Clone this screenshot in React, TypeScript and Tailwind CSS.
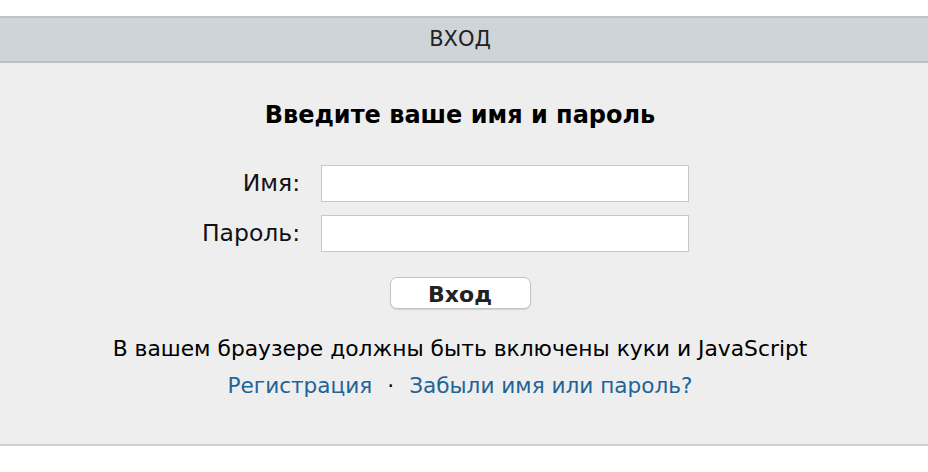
export default function App() {
  return (
    <div className="w-[928px] h-[472px] bg-white" style={{ fontFamily: '"DejaVu Sans", Verdana, sans-serif' }}>
      <div className="h-[16px]" />
      <div className="h-[47px] bg-[#cfd4d8] border-t-2 border-b-2 border-t-[#c0c4c8] border-b-[#bcc0c4] flex items-center justify-center text-[21px] text-[#222] pr-[8px]">
        ВХОД
      </div>
      <div className="h-[383px] bg-[#eeeeee] border-b-2 border-[#cfd1d4] flex flex-col items-center pr-[8px]">
        <div className="mt-[40px] text-[24px] font-bold text-black leading-none">Введите ваше имя и пароль</div>
        <div className="mt-[38px] grid grid-cols-[auto_auto] gap-x-[21px] gap-y-[13px] items-center mr-[29px]">
          <div className="text-right text-[23.5px] text-[#111]">Имя:</div>
          <input className="w-[368px] h-[37px] bg-white border border-[#c8c8c8] outline-none" />
          <div className="text-right text-[23.5px] text-[#111]">Пароль:</div>
          <input type="password" className="w-[368px] h-[37px] bg-white border border-[#c8c8c8] outline-none" />
        </div>
        <button className="mt-[25px] w-[141px] h-[32px] pt-[3px] bg-white border border-[#c4c4c4] rounded-[7px] shadow-[0_1px_1px_rgba(0,0,0,0.12)] text-[22px] font-bold text-[#222] leading-none">
          Вход
        </button>
        <div className="mt-[24px] text-[21.8px] text-black">В вашем браузере должны быть включены куки и JavaScript</div>
        <div className="mt-[4px] text-[21.6px] text-[#1f6497] flex items-center gap-[15px]">
          <span>Регистрация</span>
          <span className="text-black">·</span>
          <span>Забыли имя или пароль?</span>
        </div>
      </div>
    </div>
  );
}
